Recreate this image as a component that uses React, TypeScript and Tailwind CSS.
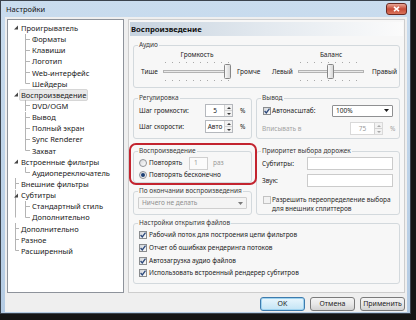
import React from "react";

const F = "font-['Noto_Sans','Open_Sans',sans-serif]";
const G = "min-w-0 rounded-[3px] border border-[#d3d9dd]";
const L = "ml-[4px] px-[1px] leading-[10px] text-[#3a3a3a]";

type Node = { t: string; l: 0 | 1; exp?: boolean; last?: boolean; sel?: boolean };

const tree: Node[] = [
  { t: "Проигрыватель", l: 0, exp: true },
  { t: "Форматы", l: 1 },
  { t: "Клавиши", l: 1 },
  { t: "Логотип", l: 1 },
  { t: "Web-интерфейс", l: 1 },
  { t: "Шейдеры", l: 1, last: true },
  { t: "Воспроизведение", l: 0, exp: true, sel: true },
  { t: "DVD/OGM", l: 1 },
  { t: "Вывод", l: 1 },
  { t: "Полный экран", l: 1 },
  { t: "Sync Renderer", l: 1 },
  { t: "Захват", l: 1, last: true },
  { t: "Встроенные фильтры", l: 0, exp: true },
  { t: "Аудиопереключатель", l: 1, last: true },
  { t: "Внешние фильтры", l: 0 },
  { t: "Субтитры", l: 0, exp: true },
  { t: "Стандартный стиль", l: 1 },
  { t: "Дополнительно", l: 1, last: true },
  { t: "Дополнительно", l: 0 },
  { t: "Разное", l: 0 },
  { t: "Расширенный", l: 0, last: true },
];

function TreeRow({ n, i }: { n: Node; i: number }) {
  const root = i >= 14;
  const ln = "#b4b4b4";
  return (
    <div className="flex h-[11.15px] items-center">
      <svg width="10" height="11" className="shrink-0">
        {root && <line x1="6.5" y1="0" x2="6.5" y2={n.last ? 5.5 : 11} stroke={ln} />}
        {n.l === 0 && !n.exp && <line x1="6.5" y1="5.5" x2="10" y2="5.5" stroke={ln} />}
        {n.exp && <path d="M9 3.5 L9 7.5 L5 7.5 Z" fill="#454545" />}
      </svg>
      {n.l === 1 && (
        <svg width="11" height="11" className="shrink-0">
          <line x1="6.5" y1="0" x2="6.5" y2={n.last ? 5.5 : 11} stroke={ln} />
          <line x1="6.5" y1="5.5" x2="11" y2="5.5" stroke={ln} />
        </svg>
      )}
      <span
        className={`rounded-[2px] border px-[1px] leading-[10px] ${
          n.sel ? "border-[#d6d6d6] bg-[#e9e9e9]" : "border-transparent"
        }`}
      >
        {n.t}
      </span>
    </div>
  );
}

function Check({ on = false, dim = false }: { on?: boolean; dim?: boolean }) {
  return (
    <span
      className={`flex h-[8px] w-[8px] shrink-0 items-center justify-center border ${
        dim ? "border-[#c2c2c2] bg-[#f2f2f2]" : "border-[#8a8c8e] bg-gradient-to-br from-[#d3d6da] to-[#fbfbfb]"
      }`}
    >
      {on && (
        <svg width="6" height="6" viewBox="0 0 6 6">
          <path d="M0.6 3 L2.3 4.9 L5.5 0.6" fill="none" stroke="#2b477a" strokeWidth="1.3" />
        </svg>
      )}
    </span>
  );
}

function Radio({ on = false }: { on?: boolean }) {
  return (
    <span className="flex h-[8px] w-[8px] shrink-0 items-center justify-center rounded-full border border-[#8f9296] bg-gradient-to-br from-[#d6d8db] to-white">
      {on && <span className="h-[4px] w-[4px] rounded-full bg-[#1d3f73]" />}
    </span>
  );
}

function Tri({ up = false, dim = false }: { up?: boolean; dim?: boolean }) {
  return (
    <svg width="4" height="2" className="block">
      <path d={up ? "M0 2 L4 2 L2 0 Z" : "M0 0 L4 0 L2 2 Z"} fill={dim ? "#a8a8a8" : "#3a3a3a"} />
    </svg>
  );
}

function Spin({ v, w, dim = false }: { v: string; w: string; dim?: boolean }) {
  return (
    <div className={`flex h-[13px] ${w} border bg-white ${dim ? "border-[#d9d9d9] text-[#9c9c9c]" : "border-[#b5b8bd]"}`}>
      <span className="flex flex-1 items-center justify-center">{v}</span>
      <span className="flex w-[8px] flex-col border-l border-[#d3d3d3] bg-[#f2f2f2]">
        <span className="flex flex-1 items-center justify-center border-b border-[#d3d3d3]">
          <Tri up dim={dim} />
        </span>
        <span className="flex flex-1 items-center justify-center">
          <Tri dim={dim} />
        </span>
      </span>
    </div>
  );
}

function Combo({ v, w, dim = false }: { v: string; w: string; dim?: boolean }) {
  return (
    <div
      className={`flex h-[12px] ${w} items-center rounded-[1px] border pl-[3px] pr-[3px] ${
        dim ? "border-[#cfcfcf] bg-[#f4f4f4] text-[#8f8f8f]" : "border-[#8f9092] bg-white"
      }`}
    >
      <span className="flex-1">{v}</span>
      <svg width="5" height="3" className="block">
        <path d="M0 0 H5 L2.5 3 Z" fill={dim ? "#7a7a7a" : "#1a1a1a"} />
      </svg>
    </div>
  );
}

function Slider({ w, t }: { w: number; t: number }) {
  const dots: number[] = [];
  for (let x = 3; x <= w - 3; x += 7) dots.push(x);
  return (
    <svg width={w} height={23} className="block">
      <defs>
        <linearGradient id={`th${w}`} x1="0" x2="1" y1="0" y2="0">
          <stop offset="0" stopColor="#fdfdfd" />
          <stop offset="1" stopColor="#d4d4d4" />
        </linearGradient>
      </defs>
      {dots.map((x) => (
        <React.Fragment key={x}>
          <rect x={x} y={2} width={1} height={1} fill="#a9a9a9" />
          <rect x={x} y={20} width={1} height={1} fill="#a9a9a9" />
        </React.Fragment>
      ))}
      <rect x={1.5} y={10.5} width={w - 3} height={2} fill="#e9e9e9" stroke="#b3b3b3" />
      <rect x={t + 0.5} y={4.5} width={6} height={14} rx={1} fill={`url(#th${w})`} stroke="#878787" />
    </svg>
  );
}

function Btn({ children, main = false }: { children: React.ReactNode; main?: boolean }) {
  return (
    <div
      className={`flex h-[14px] w-[45px] items-center justify-center rounded-[3px] border text-[7px] ${
        main
          ? "border-[#3d7bad] bg-gradient-to-b from-[#eaf6fd] to-[#c3e4f5] shadow-[inset_0_0_0_1px_#9fd3f0]"
          : "border-[#7a7a7a] bg-gradient-to-b from-[#f4f4f4] via-[#e8e8e8] to-[#d2d2d2]"
      }`}
    >
      {children}
    </div>
  );
}

export default function App() {
  return (
    <div className={`relative h-[320px] w-[416px] overflow-hidden bg-[#151515] text-[6.5px] leading-[10px] text-[#1c1c1c] ${F}`}>
      <div className="flex h-[314px] w-[411px] flex-col border border-[#3a424c] bg-gradient-to-b from-[#c9dcee] to-[#b4cbe3]">
        <div className="flex h-[16px] shrink-0 items-start pl-[5px] pr-[3px]">
          <span className="mt-[3px] text-[7.5px] leading-[11px] text-[#141414]">Настройки</span>
          <span className="ml-auto mt-[2px] flex h-[12px] w-[21px] items-center justify-center rounded-[3px] border border-[#6b2a22] bg-gradient-to-b from-[#e8a596] via-[#c54a36] to-[#d9735a]">
            <svg width="7" height="6" className="block">
              <path d="M1 0.8 L6 5.2 M6 0.8 L1 5.2" stroke="#fff" strokeWidth="1.6" />
            </svg>
          </span>
        </div>

        <div className="mb-[1px] ml-[4px] mr-[3px] flex flex-1 flex-col bg-[#efefef] pb-[1px] pl-[2px] pr-[2px] pt-[2px]">
          <div className="flex h-[274px] gap-[4px]">
            <div className="w-[117px] border border-[#8e939b] bg-white pl-[1px] pt-[2.4px] text-[7.5px] text-[#1a1a1a]">
              {tree.map((n, i) => (
                <TreeRow key={i} n={n} i={i} />
              ))}
            </div>

            <div className="flex flex-1 flex-col border border-[#cdcdcd] bg-[#f7f7f7]">
              <div className="mx-[1px] mt-[2px] flex h-[14px] items-center bg-gradient-to-r from-[#c7d3df] via-[#e3e9ef] to-[#fbfbfb] pl-[1px] text-[7.7px] font-bold text-[#111]">
                Воспроизведение
              </div>

              <div className="flex flex-col px-[4px]">
                <fieldset className={`${G} mt-[4px] h-[48px]`}>
                  <legend className={L}>Аудио</legend>
                  <div className="flex items-end pl-[7px]">
                    <div className="flex h-[23px] w-[21px] items-center">Тише</div>
                    <div className="flex w-[70px] flex-col items-center">
                      <span className="h-[10px]">Громкость</span>
                      <Slider w={70} t={62} />
                    </div>
                    <div className="ml-[5px] flex h-[23px] w-[35px] items-center">Громче</div>
                    <div className="flex h-[23px] w-[25px] items-center">Левый</div>
                    <div className="flex w-[68px] flex-col items-center">
                      <span className="h-[10px]">Баланс</span>
                      <Slider w={68} t={30} />
                    </div>
                    <div className="ml-[7px] flex h-[23px] items-center">Правый</div>
                  </div>
                </fieldset>

                <div className="mt-[5px] flex h-[46px] gap-[4px]">
                  <fieldset className={`${G} w-[119px] shrink-0`}>
                    <legend className={L}>Регулировка</legend>
                    <div className="flex flex-col gap-[3px] pl-[5px] pt-[1px]">
                      <div className="flex h-[13px] items-center">
                        <span className="w-[66px]">Шаг громкости:</span>
                        <Spin v="5" w="w-[28px]" />
                        <span className="ml-[7px]">%</span>
                      </div>
                      <div className="flex h-[13px] items-center">
                        <span className="w-[66px]">Шаг скорости:</span>
                        <Spin v="Авто" w="w-[28px]" />
                        <span className="ml-[7px]">%</span>
                      </div>
                    </div>
                  </fieldset>
                  <fieldset className={`${G} flex-1`}>
                    <legend className={L}>Вывод</legend>
                    <div className="flex flex-col pl-[6px] pt-[1px]">
                      <div className="flex h-[13px] items-center">
                        <Check on />
                        <span className="ml-[1px]">Автонасштаб:</span>
                        <span className="ml-auto mr-[6px]">
                          <Combo v="100%" w="w-[61px]" />
                        </span>
                      </div>
                      <div className="mt-[5px] flex h-[13px] items-center text-[#a3a3a3]">
                        <span className="-ml-[1px] w-[88px]">Вписывать в</span>
                        <Spin v="75" w="w-[33px]" dim />
                        <span className="ml-[7px]">%</span>
                      </div>
                    </div>
                  </fieldset>
                </div>

                <div className="mt-[7px] flex h-[69px] gap-[4px]">
                  <div className="flex w-[119px] shrink-0 flex-col">
                    <fieldset className={`${G} h-[37px]`}>
                      <legend className={L}>Воспроизведение</legend>
                      <div className="flex flex-col pl-[5px]">
                        <div className="flex h-[14px] items-center">
                          <Radio />
                          <span className="ml-[2px] w-[40px]">Повторять</span>
                          <span className="flex h-[13px] w-[19px] items-center border border-[#cfcfcf] bg-[#fbfbfb] pl-[4px] text-[#9a9a9a]">
                            1
                          </span>
                          <span className="ml-[5px] text-[#9a9a9a]">раз</span>
                        </div>
                        <div className="flex h-[10px] items-center">
                          <Radio on />
                          <span className="ml-[2px]">Повторять бесконечно</span>
                        </div>
                      </div>
                    </fieldset>
                    <fieldset className={`${G} mt-[3px] flex-1`}>
                      <legend className={L}>По окончании воспроизведения</legend>
                      <div className="pl-[4px] pt-[1px]">
                        <Combo v="Ничего не делать" w="w-[109px]" dim />
                      </div>
                    </fieldset>
                  </div>
                  <fieldset className={`${G} flex-1`}>
                    <legend className={L}>Приоритет выбора дорожек</legend>
                    <div className="flex flex-col pl-[5px]">
                      <div className="mt-[1px] flex h-[13px] items-center">
                        <span className="w-[45px]">Субтитры:</span>
                        <span className="h-[13px] w-[86px] border border-[#cbcbcb] bg-white" />
                      </div>
                      <div className="mt-[4px] flex h-[13px] items-center">
                        <span className="w-[45px]">Звук:</span>
                        <span className="h-[13px] w-[86px] border border-[#cbcbcb] bg-white" />
                      </div>
                      <div className="mt-[8px] flex items-start">
                        <span className="ml-[1px] mt-[1px]">
                          <Check dim />
                        </span>
                        <span className="ml-[1px] leading-[9px] text-[#2a2a2a]">
                          Разрешить переопределение выбора
                          <br />
                          для внешних сплиттеров
                        </span>
                      </div>
                    </div>
                  </fieldset>
                </div>

                <fieldset className={`${G} mt-[3px] h-[66px]`}>
                  <legend className={L}>Настройки открытия файлов</legend>
                  <div className="flex flex-col pl-[5px] pt-[1px]">
                    {[
                      "Рабочий поток для построения цепи фильтров",
                      "Отчет об ошибках рендеринга потоков",
                      "Автозагрузка аудио файлов",
                      "Использовать встроенный рендерер субтитров",
                    ].map((t) => (
                      <div key={t} className="flex h-[12.7px] items-center">
                        <Check on />
                        <span className="ml-[2px]">{t}</span>
                      </div>
                    ))}
                  </div>
                </fieldset>
              </div>
            </div>
          </div>

          <div className="mt-[4px] flex h-[14px] justify-end gap-[5px]">
            <Btn main>OK</Btn>
            <Btn>Отмена</Btn>
            <Btn>Применить</Btn>
          </div>
        </div>
      </div>

      <div className="absolute left-[129px] top-[143px] h-[42px] w-[128px] rounded-[7px] border-2 border-[#c3242f]" />
    </div>
  );
}
